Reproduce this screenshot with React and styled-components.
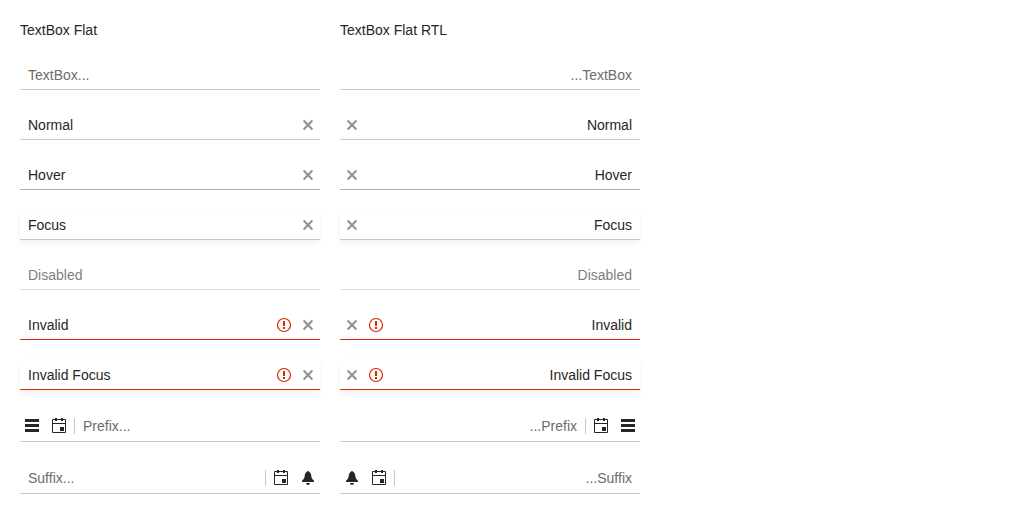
import React from "react";
import styled, { createGlobalStyle, css } from "styled-components";

const GlobalStyle = createGlobalStyle`
  *, *::before, *::after { box-sizing: border-box; }
  body {
    margin: 0;
    background: #fff;
    color: #262626;
    font: 14px/20px "Liberation Sans", Arial, sans-serif;
  }
`;

const Page = styled.main`
  display: grid;
  grid-template-columns: repeat(2, minmax(0, 300px));
  gap: 20px;
  padding: 20px;
`;

const Column = styled.section`
  display: flex;
  flex-direction: column;
  gap: 20px;
  min-width: 0;
`;

const Title = styled.h2`
  margin: 0;
  font-size: 14px;
  font-weight: 400;
  line-height: 20px;
`;

const lineColors = {
  normal: "#c8c8c8",
  hover: "#b0b0b0",
  invalid: "#d92800",
};

const Field = styled.div`
  display: flex;
  align-items: center;
  min-height: ${(p) => (p.$addons ? 32 : 30)}px;
  border-top: 1px solid transparent;
  border-bottom: 1px solid ${(p) => lineColors[p.$line || "normal"]};
  ${(p) => p.$focused && css`box-shadow: 0 3px 6px rgba(0, 0, 0, 0.06);`}
  ${(p) => p.$disabled && css`opacity: 0.6;`}
`;

const TextInput = styled.input`
  flex: 1;
  min-width: 0;
  height: 28px;
  margin: 0;
  padding: 0 8px;
  border: 0;
  outline: 0;
  background: transparent;
  color: inherit;
  font: inherit;
  &::placeholder {
    color: #6c6c6c;
    opacity: 1;
  }
`;

const IconButton = styled.button`
  display: flex;
  align-items: center;
  justify-content: center;
  flex: none;
  width: 24px;
  height: 24px;
  padding: 0;
  border: 0;
  background: transparent;
  color: ${(p) => (p.$muted ? "#929292" : "#262626")};
  cursor: pointer;
`;

const ErrorMark = styled.span`
  display: flex;
  align-items: center;
  justify-content: center;
  flex: none;
  width: 24px;
  height: 24px;
  color: #d92800;
`;

const Addons = styled.div`
  display: flex;
  align-items: center;
  gap: 3px;
`;

const Separator = styled.span`
  width: 1px;
  height: 16px;
  background: #c8c8c8;
`;

const Icon = ({ children }) => (
  <svg width="16" height="16" viewBox="0 0 16 16" fill="currentColor" aria-hidden="true">
    {children}
  </svg>
);

const ClearIcon = () => (
  <Icon>
    <path d="M3.600 3.600 12.400 12.400M12.400 3.600 3.600 12.400" fill="none" stroke="currentColor" strokeWidth="2.100" />
  </Icon>
);

const ErrorIcon = () => (
  <Icon>
    <circle cx="8" cy="8" r="6.5" fill="none" stroke="currentColor" strokeWidth="1.200" />
    <path d="M7 4h2v5H7zM7 10h2v2H7z" />
  </Icon>
);

const MenuIcon = () => (
  <Icon>
    <path d="M1 1h14v3H1zM1 6h14v3H1zM1 11h14v3H1z" />
  </Icon>
);

const CalendarIcon = () => (
  <Icon>
    <path d="M4 0h2v1h4V0h2v1h2q1 0 1 1v12q0 1-1 1H2q-1 0-1-1V2q0-1 1-1h2zM2 2v3h12V2h-2v1h-2V2H6v1H4V2zM2 6v8h12V6z" fillRule="evenodd" />
    <path d="M9 9h4v4H9z" />
  </Icon>
);

const BellIcon = () => (
  <Icon>
    <path d="M8 1c.6 0 1 .4 1.200 1C10.600 2.600 11 4 11.300 6c.3 2 .7 3 1.700 3.700.7.500 1 .9 1 1.400V12H2v-.9c0-.5.3-.9 1-1.400C4 9 4.400 8 4.700 6 5 4 5.400 2.600 6.800 2 7 1.400 7.400 1 8 1zM6 13h4c-.2 1.200-1 2-2 2s-1.800-.8-2-2z" />
  </Icon>
);

const MenuButton = () => (
  <IconButton type="button" aria-label="Menu"><MenuIcon /></IconButton>
);
const CalendarButton = () => (
  <IconButton type="button" aria-label="Calendar"><CalendarIcon /></IconButton>
);
const BellButton = () => (
  <IconButton type="button" aria-label="Notifications"><BellIcon /></IconButton>
);

function TextBox({ name, value, placeholder, line, focused, disabled, invalid, clearable, prefix, suffix }) {
  return (
    <Field $line={line} $focused={focused} $disabled={disabled} $addons={prefix || suffix}>
      {prefix && (
        <Addons>
          <MenuButton />
          <CalendarButton />
          <Separator />
        </Addons>
      )}
      <TextInput
        type="text"
        aria-label={name}
        aria-invalid={invalid}
        defaultValue={value}
        placeholder={placeholder}
        disabled={disabled}
      />
      {invalid && <ErrorMark role="img" aria-label="Invalid value"><ErrorIcon /></ErrorMark>}
      {clearable && (
        <IconButton type="button" aria-label="Clear" $muted><ClearIcon /></IconButton>
      )}
      {suffix && (
        <Addons>
          <Separator />
          <CalendarButton />
          <BellButton />
        </Addons>
      )}
    </Field>
  );
}

const boxes = [
  { name: "TextBox", placeholder: "TextBox..." },
  { name: "Normal", value: "Normal", clearable: true },
  { name: "Hover", value: "Hover", clearable: true, line: "hover" },
  { name: "Focus", value: "Focus", clearable: true, focused: true },
  { name: "Disabled", value: "Disabled", disabled: true },
  { name: "Invalid", value: "Invalid", clearable: true, invalid: true, line: "invalid" },
  { name: "Invalid Focus", value: "Invalid Focus", clearable: true, invalid: true, line: "invalid", focused: true },
  { name: "Prefix", placeholder: "Prefix...", prefix: true },
  { name: "Suffix", placeholder: "Suffix...", suffix: true },
];

function TextBoxColumn({ title, dir }) {
  return (
    <Column>
      <Title>{title}</Title>
      <Column dir={dir}>
        {boxes.map((box) => (
          <TextBox key={box.name} {...box} />
        ))}
      </Column>
    </Column>
  );
}

export default function App() {
  return (
    <>
      <GlobalStyle />
      <Page>
        <TextBoxColumn title="TextBox Flat" dir="ltr" />
        <TextBoxColumn title="TextBox Flat RTL" dir="rtl" />
      </Page>
    </>
  );
}
